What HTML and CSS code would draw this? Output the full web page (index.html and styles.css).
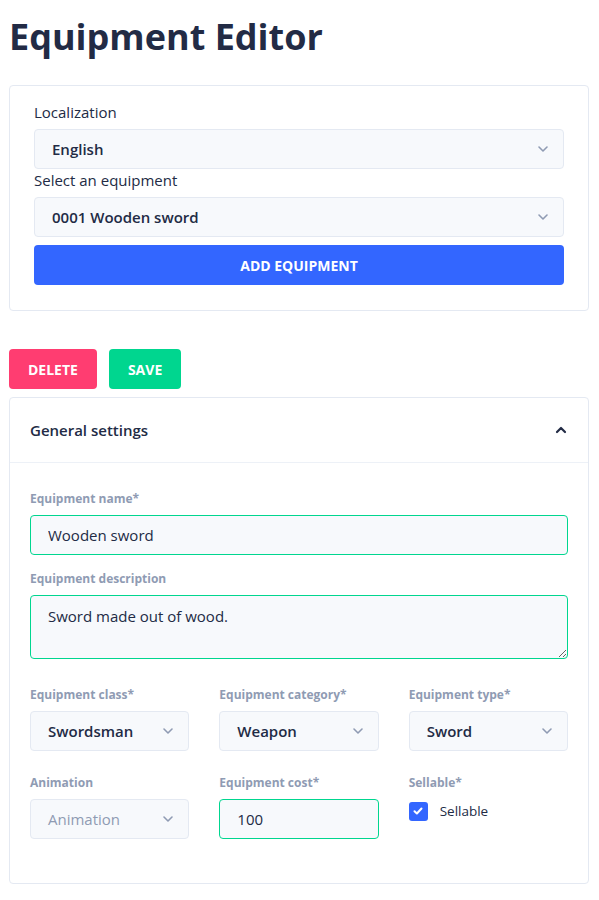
FILE: index.html
```html
<!DOCTYPE html>
<html lang="en">
<head>
<meta charset="utf-8">
<title>Equipment Editor</title>
<link rel="stylesheet" href="styles.css">
</head>
<body>
<div class="page">
  <h1 class="title">Equipment Editor</h1>

  <section class="card picker">
    <label class="plain-label">Localization</label>
    <div class="select">
      <span class="select-text">English</span>
      <svg class="chev" width="12" height="8" viewBox="0 0 12 8"><path d="M2 2l4 4 4-4" fill="none" stroke="#8f9bb3" stroke-width="1.6" stroke-linecap="round" stroke-linejoin="round"/></svg>
    </div>
    <label class="plain-label">Select an equipment</label>
    <div class="select">
      <span class="select-text">0001 Wooden sword</span>
      <svg class="chev" width="12" height="8" viewBox="0 0 12 8"><path d="M2 2l4 4 4-4" fill="none" stroke="#8f9bb3" stroke-width="1.6" stroke-linecap="round" stroke-linejoin="round"/></svg>
    </div>
    <button class="btn btn-primary btn-full">ADD EQUIPMENT</button>
  </section>

  <div class="actions">
    <button class="btn btn-danger">DELETE</button>
    <button class="btn btn-success">SAVE</button>
  </div>

  <section class="card accordion">
    <header class="acc-header">
      <span>General settings</span>
      <svg class="acc-chev" width="14" height="10" viewBox="0 0 14 10"><path d="M3 7l4-4 4 4" fill="none" stroke="#222b45" stroke-width="2.2" stroke-linecap="round" stroke-linejoin="round"/></svg>
    </header>
    <div class="acc-body">
      <div class="field">
        <label class="label">Equipment name*</label>
        <input class="input valid" type="text" value="Wooden sword">
      </div>
      <div class="field">
        <label class="label">Equipment description</label>
        <textarea class="input textarea valid">Sword made out of wood.</textarea>
      </div>
      <div class="grid">
        <div class="field">
          <label class="label">Equipment class*</label>
          <div class="select">
            <span class="select-text">Swordsman</span>
            <svg class="chev" width="12" height="8" viewBox="0 0 12 8"><path d="M2 2l4 4 4-4" fill="none" stroke="#8f9bb3" stroke-width="1.6" stroke-linecap="round" stroke-linejoin="round"/></svg>
          </div>
        </div>
        <div class="field">
          <label class="label">Equipment category*</label>
          <div class="select">
            <span class="select-text">Weapon</span>
            <svg class="chev" width="12" height="8" viewBox="0 0 12 8"><path d="M2 2l4 4 4-4" fill="none" stroke="#8f9bb3" stroke-width="1.6" stroke-linecap="round" stroke-linejoin="round"/></svg>
          </div>
        </div>
        <div class="field">
          <label class="label">Equipment type*</label>
          <div class="select">
            <span class="select-text">Sword</span>
            <svg class="chev" width="12" height="8" viewBox="0 0 12 8"><path d="M2 2l4 4 4-4" fill="none" stroke="#8f9bb3" stroke-width="1.6" stroke-linecap="round" stroke-linejoin="round"/></svg>
          </div>
        </div>
        <div class="field">
          <label class="label">Animation</label>
          <div class="select disabled">
            <span class="select-text">Animation</span>
            <svg class="chev" width="12" height="8" viewBox="0 0 12 8"><path d="M2 2l4 4 4-4" fill="none" stroke="#8f9bb3" stroke-width="1.6" stroke-linecap="round" stroke-linejoin="round"/></svg>
          </div>
        </div>
        <div class="field">
          <label class="label">Equipment cost*</label>
          <input class="input valid" type="text" value="100">
        </div>
        <div class="field">
          <label class="label">Sellable*</label>
          <label class="checkbox">
            <span class="box">
              <svg width="12" height="10" viewBox="0 0 12 10"><path d="M2.5 5.2l2.4 2.3 4.6-5" fill="none" stroke="#fff" stroke-width="2" stroke-linecap="round" stroke-linejoin="round"/></svg>
            </span>
            <span class="check-text">Sellable</span>
          </label>
        </div>
      </div>
    </div>
  </section>
</div>
</body>
</html>
```

FILE: styles.css
```css
* { box-sizing: border-box; }

html, body {
  margin: 0;
  padding: 0;
  background: #ffffff;
}

body {
  font-family: "Open Sans", "Noto Sans", sans-serif;
  color: #222b45;
}

.page {
  padding: 0 10px 16px 9px;
}

.title {
  margin: 0;
  padding: 13px 0 24px 0;
  font-size: 36px;
  line-height: 48px;
  font-weight: 700;
  color: #222b45;
}

.card {
  border: 1px solid #e4e9f2;
  border-radius: 4px;
  background: #fff;
}

.picker {
  padding: 15px 24px 25px 24px;
  display: flex;
  flex-direction: column;
}

.plain-label {
  display: block;
  font-size: 15px;
  line-height: 22px;
  color: #222b45;
  margin-bottom: 6px;
}

.select {
  height: 40px;
  display: flex;
  align-items: center;
  justify-content: space-between;
  padding: 0 14px 0 17px;
  background: #f7f9fc;
  border: 1px solid #e4e9f2;
  border-radius: 4px;
  font-size: 15px;
  font-weight: 600;
  color: #222b45;
}

.select.disabled .select-text {
  color: #8f9bb3;
  font-weight: 400;
}

.select-text {
  white-space: nowrap;
}

.chev {
  flex: none;
}

.btn {
  height: 40px;
  border: 0;
  border-radius: 4px;
  padding: 0 19px;
  font-family: inherit;
  font-size: 14px;
  font-weight: 700;
  color: #fff;
  letter-spacing: 0;
}

.btn-full {
  width: 100%;
  margin-top: 8px;
}

.btn-primary { background: #3366ff; }
.btn-danger { background: #ff3d71; }
.btn-success { background: #00d68f; }

.actions {
  display: flex;
  gap: 12px;
  margin: 38px 0 8px 0;
}

.acc-header {
  height: 65px;
  display: flex;
  align-items: center;
  justify-content: space-between;
  padding: 0 20px;
  border-bottom: 1px solid #edf1f7;
  font-size: 15px;
  font-weight: 600;
}

.acc-body {
  padding: 28px 20px 44px 20px;
}

.field {
  display: flex;
  flex-direction: column;
}

.field + .field {
  margin-top: 16px;
}

.label {
  display: block;
  font-size: 12px;
  line-height: 16px;
  font-weight: 700;
  color: #8f9bb3;
  margin-bottom: 8px;
}

.input {
  width: 100%;
  height: 40px;
  padding: 0 17px;
  background: #f7f9fc;
  border: 1px solid #e4e9f2;
  border-radius: 4px;
  font-family: inherit;
  font-size: 15px;
  font-weight: 400;
  color: #222b45;
  outline: none;
}

.input.valid {
  border-color: #00d68f;
}

.textarea {
  height: 64px;
  padding: 8px 17px;
  line-height: 24px;
  resize: vertical;
  display: block;
}

.grid {
  display: grid;
  grid-template-columns: repeat(3, 1fr);
  column-gap: 30px;
  row-gap: 24px;
  margin-top: 28px;
}

.grid .field + .field {
  margin-top: 0;
}

.checkbox {
  display: flex;
  align-items: center;
  gap: 12px;
  margin-top: 2px;
}

.box {
  width: 19px;
  height: 19px;
  border-radius: 3px;
  background: #3366ff;
  display: flex;
  align-items: center;
  justify-content: center;
}

.check-text {
  font-size: 13.5px;
  line-height: 20px;
  color: #222b45;
}
```
